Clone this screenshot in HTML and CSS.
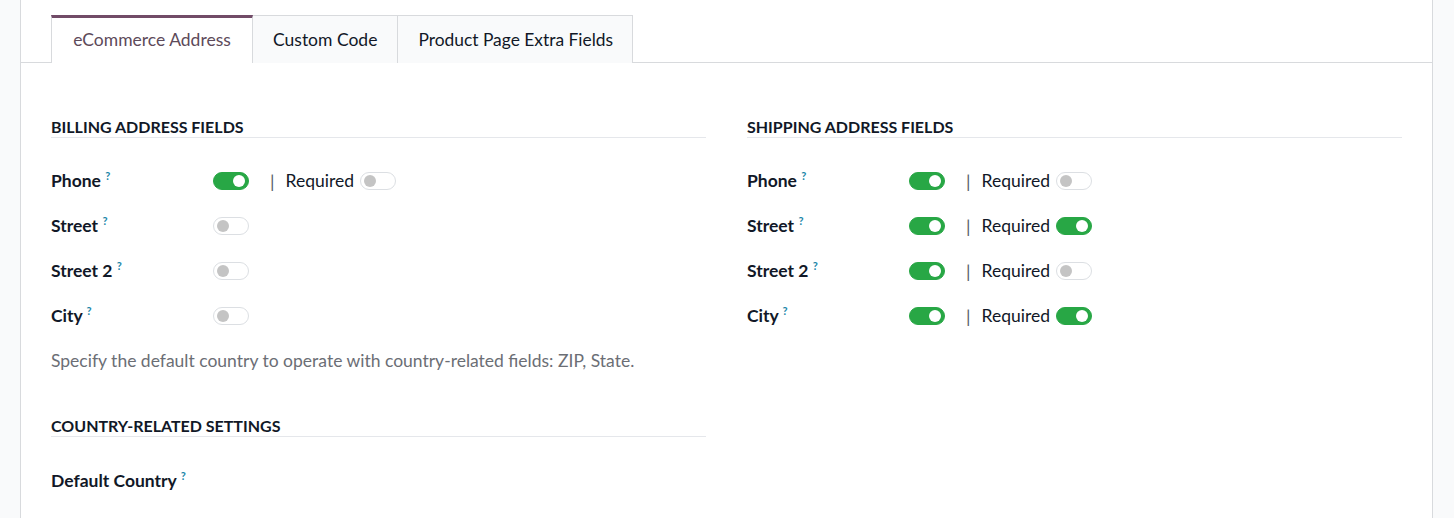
FILE: index.html
```html
<!DOCTYPE html>
<html>
<head>
<meta charset="utf-8">
<link rel="stylesheet" href="styles.css">
</head>
<body>
<div class="sheet">
  <div class="tabs">
    <div class="tab active">eCommerce Address</div>
    <div class="tab">Custom Code</div>
    <div class="tab">Product Page Extra Fields</div>
  </div>
  <div class="content">
    <div class="col">
      <div class="section-title">Billing Address Fields</div>
      <div class="rows">
        <div class="row">
          <div class="label">Phone <sup class="tip">?</sup></div>
          <span class="switch on"></span>
          <span class="sep">|</span>
          <span class="req">Required</span>
          <span class="switch"></span>
        </div>
        <div class="row">
          <div class="label">Street <sup class="tip">?</sup></div>
          <span class="switch"></span>
        </div>
        <div class="row">
          <div class="label">Street 2 <sup class="tip">?</sup></div>
          <span class="switch"></span>
        </div>
        <div class="row">
          <div class="label">City <sup class="tip">?</sup></div>
          <span class="switch"></span>
        </div>
        <div class="row desc">Specify the default country to operate with country-related fields: ZIP, State.</div>
      </div>
      <div class="section-title second">Country-Related Settings</div>
      <div class="rows">
        <div class="row country">
          <div class="label">Default Country <sup class="tip">?</sup></div>
        </div>
      </div>
    </div>
    <div class="col">
      <div class="section-title">Shipping Address Fields</div>
      <div class="rows">
        <div class="row">
          <div class="label">Phone <sup class="tip">?</sup></div>
          <span class="switch on"></span>
          <span class="sep">|</span>
          <span class="req">Required</span>
          <span class="switch"></span>
        </div>
        <div class="row">
          <div class="label">Street <sup class="tip">?</sup></div>
          <span class="switch on"></span>
          <span class="sep">|</span>
          <span class="req">Required</span>
          <span class="switch on"></span>
        </div>
        <div class="row">
          <div class="label">Street 2 <sup class="tip">?</sup></div>
          <span class="switch on"></span>
          <span class="sep">|</span>
          <span class="req">Required</span>
          <span class="switch"></span>
        </div>
        <div class="row">
          <div class="label">City <sup class="tip">?</sup></div>
          <span class="switch on"></span>
          <span class="sep">|</span>
          <span class="req">Required</span>
          <span class="switch on"></span>
        </div>
      </div>
    </div>
  </div>
</div>
</body>
</html>
```
FILE: styles.css
```css
html, body {
  margin: 0;
  padding: 0;
  background: #f9fafb;
  font-family: "Lato", "Noto Sans", sans-serif;
  color: #111827;
}
.sheet {
  margin-left: 20px;
  width: 1413px;
  min-height: 518px;
  background: #ffffff;
  border-left: 1px solid #d8dadd;
  border-right: 1px solid #d8dadd;
  padding-top: 15px;
  box-sizing: border-box;
}
.tabs {
  display: flex;
  padding-left: 30px;
  border-bottom: 1px solid #d8dadd;
  height: 47px;
}
.tab {
  box-sizing: border-box;
  height: 48px;
  padding: 0 20px;
  display: flex;
  align-items: center;
  font-size: 17.5px;
  color: #111827;
  background: #f9fafb;
  border: 1px solid #d8dadd;
  border-left: none;
  border-bottom: none;
}
.tab.active {
  background: #ffffff;
  color: #5d4a5a;
  border-top: 3px solid #714b67;
  border-left: 1px solid #d8dadd;
  width: 202px;
  justify-content: center;
  padding-bottom: 2px;
}
.tab:last-child {
  padding: 0 19px 0 20px;
  font-size: 17.4px;
}
.content {
  display: grid;
  grid-template-columns: 655px 655px;
  column-gap: 41px;
  padding: 54px 30px 0 30px;
}
.section-title {
  font-size: 16px;
  font-weight: 700;
  text-transform: uppercase;
  line-height: 19px;
  padding-bottom: 1px;
  border-bottom: 1px solid #e5e7eb;
  color: #111827;
}
.section-title.second {
  margin-top: 33px;
}
.rows {
  margin-top: 20px;
}
.row {
  display: flex;
  align-items: center;
  height: 45px;
  font-size: 17.5px;
}
.label {
  width: 162px;
  flex: none;
  font-weight: 700;
  color: #111827;
}
.tip {
  color: #1b86a8;
  font-size: 11px;
  font-weight: 700;
  vertical-align: 7px;
  line-height: 0;
}
.switch {
  position: relative;
  box-sizing: border-box;
  width: 36px;
  height: 18px;
  border-radius: 9px;
  border: 1px solid #dcdfe3;
  background: #ffffff;
  flex: none;
}
.switch::after {
  content: "";
  position: absolute;
  left: 3px;
  top: 2px;
  width: 12px;
  height: 12px;
  border-radius: 50%;
  background: #c4c4c4;
}
.switch.on {
  background: #28a745;
  border-color: #28a745;
}
.switch.on::after {
  left: auto;
  right: 3px;
  background: #ffffff;
}
.sep {
  margin-left: 21px;
  color: #555b66;
  font-size: 18px;
}
.req {
  margin-left: 11px;
  margin-right: 6px;
  color: #111827;
}
.row.desc {
  color: #6b6e75;
}
.row.country {
  padding-top: 1px;
}
```
